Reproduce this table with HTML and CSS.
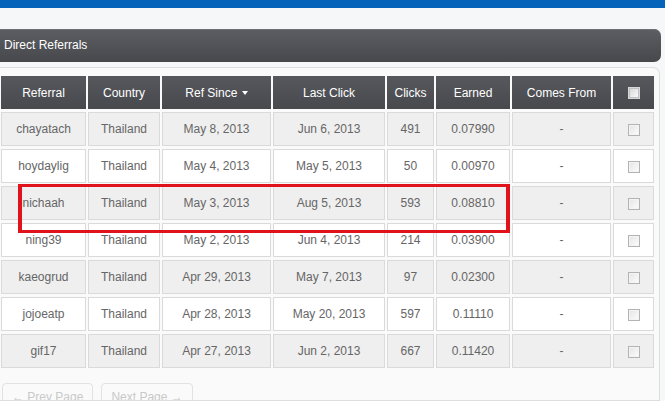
FILE: index.html
```html
<!DOCTYPE html>
<html>
<head>
<meta charset="utf-8">
<link rel="stylesheet" href="styles.css">
</head>
<body>
<div class="topbar"></div>
<div class="titlebar">Direct Referrals</div>
<div class="panel">
  <table class="refs">
    <colgroup>
      <col class="c1"><col class="c2"><col class="c3"><col class="c4"><col class="c5"><col class="c6"><col class="c7"><col class="c8">
    </colgroup>
    <thead>
      <tr>
        <th>Referral</th><th>Country</th><th>Ref Since <span class="caret"></span></th><th>Last Click</th><th>Clicks</th><th>Earned</th><th>Comes From</th><th><span class="cb cb-head"></span></th>
      </tr>
    </thead>
    <tbody>
      <tr class="odd"><td>chayatach</td><td>Thailand</td><td>May 8, 2013</td><td>Jun 6, 2013</td><td>491</td><td>0.07990</td><td>-</td><td><span class="cb"></span></td></tr>
      <tr><td>hoydaylig</td><td>Thailand</td><td>May 4, 2013</td><td>May 5, 2013</td><td>50</td><td>0.00970</td><td>-</td><td><span class="cb"></span></td></tr>
      <tr class="odd"><td>nichaah</td><td>Thailand</td><td>May 3, 2013</td><td>Aug 5, 2013</td><td>593</td><td>0.08810</td><td>-</td><td><span class="cb"></span></td></tr>
      <tr><td>ning39</td><td>Thailand</td><td>May 2, 2013</td><td>Jun 4, 2013</td><td>214</td><td>0.03900</td><td>-</td><td><span class="cb"></span></td></tr>
      <tr class="odd"><td>kaeogrud</td><td>Thailand</td><td>Apr 29, 2013</td><td>May 7, 2013</td><td>97</td><td>0.02300</td><td>-</td><td><span class="cb"></span></td></tr>
      <tr><td>jojoeatp</td><td>Thailand</td><td>Apr 28, 2013</td><td>May 20, 2013</td><td>597</td><td>0.11110</td><td>-</td><td><span class="cb"></span></td></tr>
      <tr class="odd"><td>gif17</td><td>Thailand</td><td>Apr 27, 2013</td><td>Jun 2, 2013</td><td>667</td><td>0.11420</td><td>-</td><td><span class="cb"></span></td></tr>
    </tbody>
  </table>
  <div class="pager">
    <span class="pbtn">&larr; Prev Page</span>
    <span class="pbtn">Next Page &rarr;</span>
  </div>
</div>
<div class="highlight"></div>
</body>
</html>
```

FILE: styles.css
```css
html, body {
  margin: 0;
  padding: 0;
}
body {
  background: #f6f7f8;
  font-family: "Liberation Sans", Arial, sans-serif;
  font-size: 12px;
  color: #666;
  width: 665px;
  height: 401px;
  overflow: hidden;
  position: relative;
}
.topbar {
  height: 8px;
  background: #0563ba;
}
.titlebar {
  margin-top: 21px;
  width: 661px;
  height: 33px;
  box-sizing: border-box;
  padding-left: 4px;
  line-height: 33px;
  color: #fff;
  background: linear-gradient(#5c5e63, #46484c);
  border-radius: 0 7px 7px 0;
  box-shadow: inset 0 1px 0 #6d6f74;
}
.panel {
  margin-top: 5px;
  width: 660px;
  box-sizing: border-box;
  background: #fafafa;
  border: 1px solid #dedede;
  border-left: none;
  border-radius: 0 7px 0 0;
  padding: 5px 2px 0 0;
  height: 334px;
  overflow: hidden;
}
.refs {
  border-collapse: separate;
  border-spacing: 2px 3px;
  table-layout: fixed;
  width: 657px;
  margin-left: -1px;
}
.c1 { width: 85px; }
.c2 { width: 72px; }
.c3 { width: 109px; }
.c4 { width: 112px; }
.c5 { width: 47px; }
.c6 { width: 74px; }
.c7 { width: 99px; }
.c8 { width: 41px; }
.refs th {
  height: 33px;
  padding: 0;
  font-weight: normal;
  color: #fff;
  background: linear-gradient(#56585d, #47494d);
  text-align: center;
  white-space: nowrap;
}
.refs td {
  height: 32px;
  padding: 0;
  text-align: center;
  background: #fff;
  border: 1px solid #dadada;
  white-space: nowrap;
}
.refs tr.odd td {
  background: #efefef;
}
.caret {
  display: inline-block;
  width: 0;
  height: 0;
  border-left: 3px solid transparent;
  border-right: 3px solid transparent;
  border-top: 4px solid #fff;
  vertical-align: middle;
  margin-left: 1px;
}
.cb {
  display: inline-block;
  width: 10px;
  height: 10px;
  border: 1px solid #b3b3b3;
  background: linear-gradient(135deg, #e4e4e4, #fdfdfd);
  vertical-align: middle;
  box-shadow: inset 0 0 0 1px #f4f4f4;
}
.cb-head {
  border-color: #d8d8d8;
  background: linear-gradient(135deg, #d4d4d6, #ffffff);
  box-shadow: inset 0 0 0 1px #bfc0c3;
}
.pager {
  display: flex;
  gap: 8px;
  margin-top: 12px;
  padding-left: 2px;
}
.pbtn {
  display: inline-block;
  height: 26px;
  line-height: 26px;
  padding: 0 9px;
  box-sizing: border-box;
  border: 1px solid #e2e2e2;
  border-radius: 4px;
  background: #fafafa;
  color: #c9c9c9;
  white-space: nowrap;
}
.highlight {
  position: absolute;
  left: 18px;
  top: 184px;
  width: 492px;
  height: 49px;
  box-sizing: border-box;
  border: 3px solid #e0121c;
  border-width: 3px 4px;
}
```
